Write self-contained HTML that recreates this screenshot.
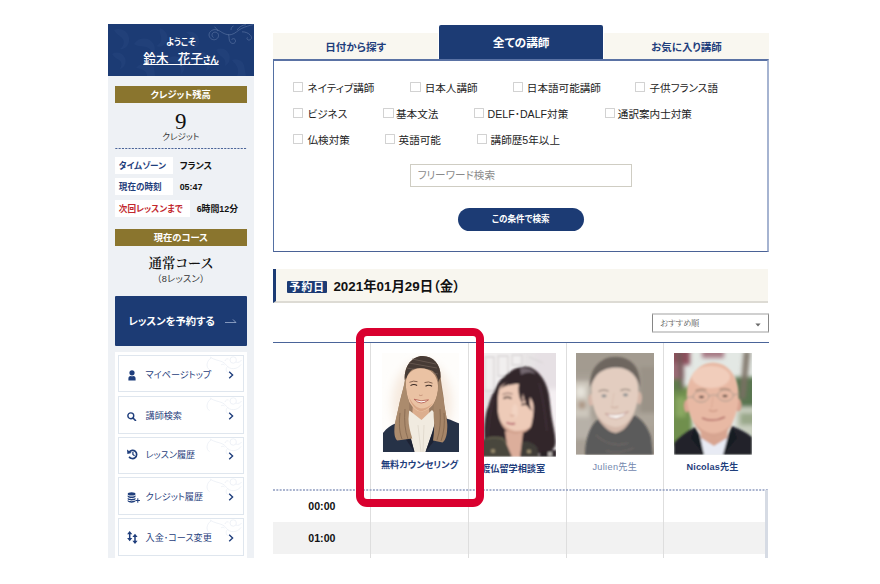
<!DOCTYPE html>
<html lang="ja">
<head>
<meta charset="utf-8">
<title>講師検索</title>
<style>
*{box-sizing:border-box;margin:0;padding:0}
html,body{width:880px;height:584px;background:#fff;overflow:hidden}
body{position:relative;font-family:"Liberation Sans","Noto Sans CJK JP",sans-serif;color:#222;font-size:10px;line-height:1;font-feature-settings:"palt"}
.abs{position:absolute}
.serif{font-family:"Liberation Serif","Noto Serif CJK SC",serif}
/* sidebar */
#side{left:108.2px;top:24.4px;width:145.6px;height:534px;background:#eef1f5}
#welcome{left:0;top:0;width:145.6px;height:52px;background:#1c3b74;color:#fff;text-align:center;overflow:hidden}
#welcome .w1{position:absolute;left:0;right:0;top:13.3px;font-size:8.6px;font-weight:700}
#welcome .w2{position:absolute;left:0;right:0;top:28.2px;font-size:12.6px;font-weight:500;white-space:pre;word-spacing:1.2px}
#welcome .w2 span{text-decoration:underline;text-underline-offset:0.6px;text-decoration-thickness:0.8px}
#welcome .w2 small{font-size:8.6px;font-weight:700}
.gold{left:6.6px;width:132px;height:16.5px;background:#8a752e;color:#fff;font-weight:700;font-size:9.3px;text-align:center;line-height:18.3px;overflow:hidden}
.lbl{left:6.6px;height:17px;background:#fff;color:#1f3e7c;font-weight:700;font-size:8.6px;line-height:18.6px;overflow:hidden;padding-left:4px;white-space:nowrap}
.val{font-weight:700;font-size:8.9px;line-height:18.6px;color:#111;white-space:nowrap}
#reserve{left:6.6px;top:271.4px;width:132px;height:50px;background:#1c3b74;color:#fff;font-weight:700;font-size:10.3px;line-height:52px;padding-left:13.5px;border-radius:1px}
#menu{left:6.6px;top:327.5px;width:132px;height:206.5px;background:#fff}
.mi{left:3.4px;width:125.6px;border:1px solid #dfe6ee;background:#fff;color:#1f3e7c;font-size:9.1px;line-height:20px;white-space:nowrap}
.mi .t{position:absolute;left:26.4px}
.mi svg.ic{position:absolute}
.mi svg.ch{position:absolute;left:109.3px}
.mi svg.orn{position:absolute;right:0;top:0}
.mi{overflow:hidden}
/* main */
.tab{top:32.5px;height:26.2px;width:164.4px;background:#f9f7f0;color:#1f3e7c;font-weight:700;font-size:10.5px;text-align:center;line-height:29.6px}
.tab.on{top:24.5px;height:34.8px;background:#1c3b74;color:#fff;line-height:36px;border-radius:2px 2px 0 0;font-size:11.7px}
#panel{left:273px;top:59px;width:496px;height:193px;border:1px solid #5470a3;border-top:2px solid #5a72a4;border-right:2px solid #a6b4d1;border-bottom:1.1px solid #4a6296;background:#fff}
.cb{width:10.2px;height:10.2px;border:1px solid #d2d2d2;background:#fff;border-radius:0.5px}
.ct{font-size:10.6px;color:#222;white-space:nowrap;line-height:12px}
#kw{left:409.7px;top:164.3px;width:222.2px;height:23.2px;border:1px solid #cfcdc3;background:#fff;font-size:10.6px;color:#8a8a8a;line-height:21.4px;padding-left:7px}
#go{left:457.9px;top:208px;width:125.7px;height:23.4px;border-radius:12px;background:#1c3b74;color:#fff;font-weight:700;font-size:8.6px;text-align:center;line-height:23.6px}
#dbar{left:273.4px;top:269px;width:495px;height:34px;background:#f8f6ef;border-left:3.6px solid #1c3b74;border-bottom:2px solid #dddbd4}
#badge{left:287px;top:280.7px;width:39.6px;height:12.6px;background:#1c3b74;color:#fff;font-weight:700;font-size:10.8px;line-height:12.6px;text-align:center;overflow:hidden;letter-spacing:1px;padding-left:1px;border-radius:1px}
#date{left:333.4px;top:279px;font-size:13.4px;font-weight:700;color:#111;line-height:16px;white-space:nowrap}
#sel{left:652px;top:313.4px;width:116.6px;height:19.4px;border:1px solid #868686;border-top:2px solid #d0d0d0;border-bottom:2px solid #d0d0d0;border-radius:1px;background:#fff;font-size:8.2px;font-weight:400;color:#555;line-height:18px;padding-left:6.8px}

.vl{top:343px;width:1px;height:215px;background:#dedede}
.tm{left:273.4px;width:97px;text-align:center;font-weight:700;font-size:10.6px;color:#111;line-height:12px}
.nm{font-weight:700;font-size:9.15px;color:#1f3e7c;text-align:center;line-height:11px;white-space:nowrap}
#redbox{left:355.6px;top:327.8px;width:128.4px;height:179.2px;border:8px solid #d9002f;border-radius:11px}
</style>
</head>
<body>

<!-- ================= SIDEBAR ================= -->
<div id="side" class="abs">
  <div id="welcome" class="abs">
    <svg class="abs" style="left:0;top:0" width="146" height="52" viewBox="0 0 146 52">
      <g fill="#2b4b87" opacity="0.32">
        <path d="M6 6c7-3 14 1 15 8s-4 12-9 11c4-3 5-8 2-11s-6-4-8-8zM4 30c5-3 11-1 13 4s-1 10-5 11c2-4 2-7-1-9s-5-3-7-6zM26 20c4-6 12-7 17-3s5 11 1 15c0-5-2-8-6-9s-8 0-12-3zM28 44c5-6 13-6 18-1l1 9h-8c0-4-3-7-11-8zM52 4c6 2 9 8 7 13s-7 7-11 5c4-2 6-5 5-9s-2-6-1-9zM58 36c5-5 12-5 16 0s3 11-1 14c1-5-1-8-4-10s-7-2-11-4zM78 8c6-2 12 2 13 7s-2 10-7 10c3-3 4-6 2-9s-5-5-8-8zM86 30c6-4 13-2 16 3s1 12-4 14c2-5 1-8-2-11s-6-3-10-6zM108 26c5-3 11-1 13 4s0 10-4 12c1-4 0-7-3-9s-4-4-6-7zM124 36c5-2 10 0 12 5l2 11h-9c2-4 1-8-1-11s-3-3-4-5z"/>
      </g>
      <g fill="none" stroke="#7f95bd" stroke-width="0.55" opacity="0.75">
        <path d="M105.5 13.5c-2-1-2-4 0-5s5 0 5 3-3 5-6 4-5-5-2-8 7-2 10 0 7 4 11 3 6-4 10-6 8-3 12-4"/>
        <path d="M120.5 10.4c1 3 0 6 2 8s5 1 5-1.5-3-3-4-1"/>
        <path d="M110 7c-1-2-3-4-3.500-4M123 6c0-2 1-3.500 2.500-4M134 7.800c3 0 6 1 8 3s2 4 0 5-4-1-2.500-2.500"/>
        <path d="M129 6.100c2-3 5-5 9-5.500"/>
      </g>
    </svg>
    <div class="w1">ようこそ</div>
    <div class="w2"><span>鈴木  花子<small>さん</small></span></div>
  </div>

  <div class="abs gold" style="top:62px">クレジット残高</div>
  <div class="abs serif" style="left:0;width:145.3px;top:84.4px;text-align:center;font-size:23px;line-height:26px;color:#111">9</div>
  <div class="abs" style="left:0;width:145.3px;top:108.5px;text-align:center;font-size:8.6px;line-height:9px;color:#333">クレジット</div>
  <svg class="abs" style="left:6.6px;top:122.6px" width="132" height="3" viewBox="0 0 132 3"><line x1="0.3" y1="1.5" x2="132" y2="1.5" stroke="#4a6499" stroke-width="1.1" stroke-dasharray="2.1 1.2"/></svg>

  <div class="abs lbl" style="top:132.8px;width:58px">タイムゾーン</div>
  <div class="abs val" style="top:132.8px;left:71.5px">フランス</div>
  <div class="abs lbl" style="top:154.1px;width:58px">現在の時刻</div>
  <div class="abs val" style="top:154.1px;left:71.5px">05:47</div>
  <div class="abs lbl" style="top:175.6px;width:75px;color:#c2272d">次回レッスンまで</div>
  <div class="abs val" style="top:175.6px;left:88.5px">6時間12分</div>

  <div class="abs gold" style="top:204.8px">現在のコース</div>
  <div class="abs serif" style="left:0;width:145.3px;top:230.6px;text-align:center;font-size:13.4px;font-weight:600;line-height:18px;color:#111">通常コース</div>
  <div class="abs" style="left:0;width:145.3px;top:249.5px;text-align:center;font-size:9.2px;letter-spacing:0.3px;line-height:10px;color:#333">（8レッスン）</div>

  <div id="reserve" class="abs">レッスンを予約する
    <svg class="abs" style="left:110px;top:22px" width="12" height="6" viewBox="0 0 12 6"><path d="M0 4.5h11L8 1.5" fill="none" stroke="#9fb0cf" stroke-width="0.8"/></svg>
  </div>

  <div id="menu" class="abs">
    <div class="abs mi" style="top:3.2px;height:37.3px"><svg class="orn" width="40" height="19" viewBox="0 0 40 19"><g fill="none" stroke="#e8ecf3" stroke-width="0.7"><path d="M6.500 13.500C3 12 3 5 8.200 1.900M7 1C11 4 16 4.300 19.100 5.700C22 7 23 9 24.600 10.600C27 12.800 30 13 32.800 12.300C35 11.600 37 10 38.200 8.400M24.600 10.600C23 12 22.500 14.500 24.500 16.500M22 5C22.500 3 24 2.500 25.500 3M18 9C19 8 20.500 8 21.500 9"/><circle cx="30.200" cy="4" r="3.200"/><path d="M33 6C35 7 37.500 6 38.500 4"/></g></svg><svg class="ic" style="left:8.6px;top:13.9px" width="8" height="11" viewBox="0 0 8 11"><circle cx="4" cy="2.8" r="2.6" fill="#1f3e7c"/><path d="M0.4 10.6V8.4C0.4 6.6 1.7 5.9 2.6 5.9C3.4 6.4 4.6 6.4 5.4 5.9C6.3 5.9 7.6 6.6 7.6 8.4V10.6Z" fill="#1f3e7c"/></svg><span class="t" style="top:8.6px">マイページトップ</span><svg class="ch" style="top:14.6px" width="6" height="8" viewBox="0 0 6 8"><path d="M1.2 0.8L4.6 4L1.2 7.2" fill="none" stroke="#1f3e7c" stroke-width="1.35"/></svg></div>
    <div class="abs mi" style="top:44.3px;height:37.8px"><svg class="orn" width="40" height="19" viewBox="0 0 40 19"><g fill="none" stroke="#e8ecf3" stroke-width="0.7"><path d="M6.500 13.500C3 12 3 5 8.200 1.900M7 1C11 4 16 4.300 19.100 5.700C22 7 23 9 24.600 10.600C27 12.800 30 13 32.800 12.300C35 11.600 37 10 38.200 8.400M24.600 10.600C23 12 22.500 14.500 24.500 16.500M22 5C22.500 3 24 2.500 25.500 3M18 9C19 8 20.500 8 21.500 9"/><circle cx="30.200" cy="4" r="3.200"/><path d="M33 6C35 7 37.500 6 38.500 4"/></g></svg><svg class="ic" style="left:8.2px;top:14.5px" width="9.4" height="9.4" viewBox="0 0 9.4 9.4"><circle cx="3.8" cy="3.8" r="2.95" fill="none" stroke="#1f3e7c" stroke-width="1.4"/><path d="M6 6L8.5 8.5" stroke="#1f3e7c" stroke-width="1.6" stroke-linecap="round"/></svg><span class="t" style="top:9.1px">講師検索</span><svg class="ch" style="top:15.1px" width="6" height="8" viewBox="0 0 6 8"><path d="M1.2 0.8L4.6 4L1.2 7.2" fill="none" stroke="#1f3e7c" stroke-width="1.35"/></svg></div>
    <div class="abs mi" style="top:85.5px;height:37px"><svg class="orn" width="40" height="19" viewBox="0 0 40 19"><g fill="none" stroke="#e8ecf3" stroke-width="0.7"><path d="M6.500 13.500C3 12 3 5 8.200 1.900M7 1C11 4 16 4.300 19.100 5.700C22 7 23 9 24.600 10.600C27 12.800 30 13 32.800 12.300C35 11.600 37 10 38.200 8.400M24.600 10.600C23 12 22.500 14.500 24.500 16.500M22 5C22.500 3 24 2.500 25.500 3M18 9C19 8 20.500 8 21.500 9"/><circle cx="30.200" cy="4" r="3.200"/><path d="M33 6C35 7 37.500 6 38.500 4"/></g></svg><svg class="ic" style="left:8.2px;top:10.9px" width="11" height="10.4" viewBox="0 0 11 10.4"><path d="M2.2 3.1A4.1 4.1 0 1 1 2.1 7.7" fill="none" stroke="#1f3e7c" stroke-width="1.7"/><path d="M0 0.5L0.4 4.9L4.6 4Z" fill="#1f3e7c"/><path d="M5.9 2.9V5.5L7.6 6.7" fill="none" stroke="#1f3e7c" stroke-width="1.25"/></svg><span class="t" style="top:6.6px">レッスン履歴</span><svg class="ch" style="top:13.2px" width="6" height="8" viewBox="0 0 6 8"><path d="M1.2 0.8L4.6 4L1.2 7.2" fill="none" stroke="#1f3e7c" stroke-width="1.35"/></svg></div>
    <div class="abs mi" style="top:125.5px;height:37.6px"><svg class="orn" width="40" height="19" viewBox="0 0 40 19"><g fill="none" stroke="#e8ecf3" stroke-width="0.7"><path d="M6.500 13.500C3 12 3 5 8.200 1.900M7 1C11 4 16 4.300 19.100 5.700C22 7 23 9 24.600 10.600C27 12.800 30 13 32.800 12.300C35 11.600 37 10 38.200 8.400M24.600 10.600C23 12 22.500 14.500 24.500 16.500M22 5C22.500 3 24 2.500 25.500 3M18 9C19 8 20.500 8 21.500 9"/><circle cx="30.200" cy="4" r="3.200"/><path d="M33 6C35 7 37.500 6 38.500 4"/></g></svg><svg class="ic" style="left:8.2px;top:13.3px" width="13" height="11" viewBox="0 0 13 11"><g fill="#1f3e7c"><ellipse cx="4.6" cy="1.9" rx="3.9" ry="1.7"/><path d="M0.7 3.3c1 1.6 6.8 1.6 7.8 0v1.5c-1 1.6-6.8 1.6-7.8 0z"/><path d="M0.7 5.7c1 1.6 6.8 1.6 7.8 0v1.5c-1 1.6-6.8 1.6-7.8 0z"/><path d="M0.7 8.1c1 1.6 6.8 1.6 7.8 0v1.2c-1 1.8-6.8 1.8-7.8 0z"/><path d="M10.3 6.3h1v1.7h1.6v1h-1.6v1.7h-1v-1.7h-1.6v-1h1.6z"/></g></svg><span class="t" style="top:8.4px">クレジット履歴</span><svg class="ch" style="top:14.4px" width="6" height="8" viewBox="0 0 6 8"><path d="M1.2 0.8L4.6 4L1.2 7.2" fill="none" stroke="#1f3e7c" stroke-width="1.35"/></svg></div>
    <div class="abs mi" style="top:166.5px;height:37.3px"><svg class="orn" width="40" height="19" viewBox="0 0 40 19"><g fill="none" stroke="#e8ecf3" stroke-width="0.7"><path d="M6.500 13.500C3 12 3 5 8.200 1.900M7 1C11 4 16 4.300 19.100 5.700C22 7 23 9 24.600 10.600C27 12.800 30 13 32.800 12.300C35 11.600 37 10 38.200 8.400M24.600 10.600C23 12 22.500 14.500 24.500 16.500M22 5C22.500 3 24 2.500 25.500 3M18 9C19 8 20.500 8 21.500 9"/><circle cx="30.200" cy="4" r="3.200"/><path d="M33 6C35 7 37.500 6 38.500 4"/></g></svg><svg class="ic" style="left:8.2px;top:12px" width="11" height="13" viewBox="0 0 11 13"><g fill="#1f3e7c"><path d="M2.7 0L5.3 3.2H3.45V7H5.3L2.7 10.2L0.1 7H1.95V3.2H0.1Z"/><path d="M8 2.8L10.6 6H8.75V9.8H10.6L8 13L5.4 9.8H7.25V6H5.4Z"/></g></svg><span class="t" style="top:8.6px">入金･コース変更</span><svg class="ch" style="top:14.6px" width="6" height="8" viewBox="0 0 6 8"><path d="M1.2 0.8L4.6 4L1.2 7.2" fill="none" stroke="#1f3e7c" stroke-width="1.35"/></svg></div>
  </div>
</div>

<!-- ================= MAIN ================= -->
<div class="abs tab" style="left:273.4px">日付から探す</div>
<div class="abs tab on" style="left:439.2px;width:163.9px">全ての講師</div>
<div class="abs tab" style="left:604.4px;width:164.2px">お気に入り講師</div>
<div id="panel" class="abs"></div>

<div class="abs cb" style="left:293.2px;top:81.6px"></div><div class="abs ct" style="left:307.5px;top:82.2px">ネイティブ講師</div>
<div class="abs cb" style="left:410.4px;top:81.6px"></div><div class="abs ct" style="left:424.7px;top:82.2px">日本人講師</div>
<div class="abs cb" style="left:513.0px;top:81.6px"></div><div class="abs ct" style="left:526.8px;top:82.2px">日本語可能講師</div>
<div class="abs cb" style="left:635.2px;top:81.6px"></div><div class="abs ct" style="left:649.5px;top:82.2px">子供フランス語</div>
<div class="abs cb" style="left:293.2px;top:107.6px"></div><div class="abs ct" style="left:307.5px;top:108.2px">ビジネス</div>
<div class="abs cb" style="left:383.4px;top:107.6px"></div><div class="abs ct" style="left:396.0px;top:108.2px">基本文法</div>
<div class="abs cb" style="left:474.2px;top:107.6px"></div><div class="abs ct" style="left:487.6px;top:108.2px">DELF･DALF対策</div>
<div class="abs cb" style="left:604.5px;top:107.6px"></div><div class="abs ct" style="left:617.8px;top:108.2px">通訳案内士対策</div>
<div class="abs cb" style="left:293.2px;top:133.5px"></div><div class="abs ct" style="left:307.5px;top:134.1px">仏検対策</div>
<div class="abs cb" style="left:385.2px;top:133.5px"></div><div class="abs ct" style="left:398.6px;top:134.1px">英語可能</div>
<div class="abs cb" style="left:477.0px;top:133.5px"></div><div class="abs ct" style="left:490.6px;top:134.1px">講師歴5年以上</div>
<div id="kw" class="abs">フリーワード検索</div>
<div id="go" class="abs">この条件で検索</div>

<div id="dbar" class="abs"></div>
<div id="badge" class="abs">予約日</div>
<div id="date" class="abs">2021年01月29日（金）</div>

<div id="sel" class="abs serif">おすすめ順<svg class="abs" style="left:101.6px;top:7.2px" width="6" height="4" viewBox="0 0 6 4"><path d="M0.4 0.4H5.6L3 3.4Z" fill="#6a6a6a"/></svg></div>


<!-- table -->
<div class="abs" style="left:273.4px;top:342px;width:495.4px;height:1.2px;background:#4a6499"></div>
<div class="abs" style="left:273.4px;top:522px;width:491.6px;height:32px;background:#f2f2f2"></div>
<div class="abs vl" style="left:370.2px"></div>
<div class="abs vl" style="left:468.2px"></div>
<div class="abs vl" style="left:565.8px"></div>
<div class="abs vl" style="left:663.2px"></div>
<svg class="abs" style="left:273.4px;top:488px" width="495" height="4" viewBox="0 0 495 4"><line x1="0" y1="2" x2="495" y2="2" stroke="#8e9cc0" stroke-width="1.7" stroke-dasharray="2 1.33"/></svg>
<div class="abs" style="left:765px;top:490px;width:3.3px;height:68px;background:#d6dbe4"></div>
<div class="abs tm" style="top:500px">00:00</div>
<div class="abs tm" style="top:531.5px">01:00</div>

<div class="abs nm" style="left:370.6px;width:98px;top:459.5px">無料カウンセリング</div>
<div class="abs nm" style="left:481.2px;top:464.2px">渡仏留学相談室</div>
<div class="abs nm" style="left:566.2px;width:97.3px;top:462.2px;font-weight:400;color:#7388ae;letter-spacing:0.35px">Julien先生</div>
<div class="abs nm" style="left:663.5px;width:98px;top:462.2px;letter-spacing:0.15px">Nicolas先生</div>

<!-- PHOTOS -->
<svg class="abs" style="left:381.5px;top:352.8px" width="77.3" height="99" viewBox="0 0 77.3 99">
<defs><filter id="b1" x="-20%" y="-20%" width="140%" height="140%"><feGaussianBlur stdDeviation="0.75"/></filter>
<filter id="b1b" x="-30%" y="-30%" width="160%" height="160%"><feGaussianBlur stdDeviation="5"/></filter>
<clipPath id="c1"><rect width="77.3" height="99"/></clipPath></defs>
<g clip-path="url(#c1)">
<rect width="77.3" height="99" fill="#fefdfb"/>
<ellipse cx="40" cy="50" rx="30" ry="42" fill="#f6eadf" filter="url(#b1b)"/>
<g filter="url(#b1)">
<!-- back hair mass -->
<path d="M22.8 27C22 12 31 3 40.7 3.1C51 3.4 59 11 58.6 24C60 36 62 44 62.3 52C64 62 66 70 65.2 76C65 84 63 88 60.5 89.4L51 87.5L52 66L27 66L30.3 85.6L15.2 87.5C12 84 11.5 79 12.4 74C14 66 16 58 17.1 52C19 42 22 36 22.8 27Z" fill="#9a7b62"/>
<!-- dark top -->
<path d="M22.8 27C22 12 31 3 40.7 3.1C51 3.4 59 11 58.6 24L56.7 29C55.5 23 53 19.5 50 17.5C44 15 36 14.5 31 16C27.5 18 25.5 21.5 24.6 25.5Z" fill="#463a34"/>
<path d="M27 10l28 5M25 15l31 6M30 6l24 5" stroke="#7a6a60" stroke-width="0.6" fill="none"/>
<!-- neck -->
<path d="M31 50L47 50L47.5 66L39 70L30 66Z" fill="#dcae8e"/>
<!-- shirt -->
<path d="M27.5 57.5L22.5 69L32 99L44 99L55.5 63L50 57L39.5 67Z" fill="#f1ebe0"/>
<path d="M36 72l3 27M42 72l-1 27" stroke="#d8d0c2" stroke-width="0.6" fill="none"/>
<!-- blazer -->
<path d="M1 99L1 80C5 75 9 72.5 13.3 70.6L23 65.5L27 80L32.5 99Z" fill="#283046"/>
<path d="M77.3 99L77.3 70.6C73 68.5 69 67 66 66L55 62.5L50 80L43.5 99Z" fill="#283046"/>
<path d="M23 65.5L21 82L32.5 99L27 78Z" fill="#1b2233"/>
<path d="M55 62.5L58 80L43.5 99L51 78Z" fill="#1b2233"/>
<!-- face -->
<path d="M23.8 29C24.4 20.5 31 15.5 38 15.2C47.5 14.8 55.6 21 56 33C56.2 40 54.6 46 51.5 50.8C48.4 55.4 43 58.6 38.8 58.6C34 58.3 29.6 53.4 27 48.2C24.8 43 23.7 36 23.8 29Z" fill="#eac2a3"/>
<path d="M27 44C29 52 34 57.5 38.8 58.3C43 58 48 54.5 51 50C47 54 43 55.5 39 55.5C34 55 30 50 27 44Z" fill="#d9a685"/>
<!-- front strands -->
<path d="M24 24C21.5 34 19 44 17.1 52C15 62 12.5 70 12.4 76C12 82 13.5 86 15.2 87.5L30.3 85.6C28 78 26.5 72 26.5 66C27 60 27.6 54 26.8 48C24.8 42 23.2 34 24 24Z" fill="#ab8b6d"/>
<path d="M57 25C59.5 36 61.5 44 62.3 52C64 62 66 70 65.2 76C65 83 63 88 60.5 89.4L51 87.5C52 80 52.5 74 52 68C51.5 62 51.4 56 51.8 51C54.8 45 57 36 57 25Z" fill="#a68567"/>
<path d="M18 60C17 70 17 78 20 86M23 56C22 68 23 78 26 86M58 56C59 68 58 78 55 87M62 60C63 70 62 80 59 88" stroke="#7d6049" stroke-width="0.7" fill="none"/>
<!-- features -->
<path d="M28.5 32.6q3.2-2 6.6-0.2" stroke="#3a2a24" stroke-width="1.1" fill="none"/>
<path d="M43.5 33.2q3.2-2 6.6 0" stroke="#3a2a24" stroke-width="1.1" fill="none"/>
<path d="M27.5 29.3q4-2 8-0.6M42.5 29.6q4-1.6 8 0.6" stroke="#6a4b3b" stroke-width="0.8" fill="none"/>
<path d="M32 46.2Q39 53.5 46.5 46.8Q39 49 32 46.2Z" fill="#fffaf5" stroke="#b8675a" stroke-width="0.9"/>
<path d="M37 42q1.8 1.2 3.6 0" stroke="#c08d74" stroke-width="0.8" fill="none"/>
</g>
</g></svg>
<svg class="abs" style="left:478.5px;top:352.8px" width="77.5" height="103.8" viewBox="0 0 77.5 103.8">
<defs><filter id="b2" x="-20%" y="-20%" width="140%" height="140%"><feGaussianBlur stdDeviation="0.85"/></filter>
<filter id="b2b" x="-30%" y="-30%" width="160%" height="160%"><feGaussianBlur stdDeviation="2.5"/></filter>
<clipPath id="c2"><rect width="77.5" height="103.8"/></clipPath></defs>
<g clip-path="url(#c2)">
<rect width="77.5" height="103.8" fill="#e7e4e5"/>
<g filter="url(#b2b)">
<rect x="-3" y="-3" width="46" height="40" fill="#f1efef"/>
<rect x="56" y="-3" width="26" height="40" fill="#e6e0e4"/>
<rect x="66" y="36" width="16" height="56" fill="#f4eff2"/>
</g>
<g filter="url(#b2)">
<path d="M6 4h9v34h-9zM19 3h10v20h-10zM33 2h10v10h-10zM50 4l14 6" fill="none" stroke="#d9d5d6" stroke-width="1.3"/>
<!-- hair -->
<path d="M44.3 13.7C50 13 56 16 59.9 20.6C65 26 68 33 69.6 40C71 48 71.5 56 72.6 63.5C74 72 76 80 76.5 86.9C77 92 75.5 95 73.5 96.7C70 100 64 101.5 59.9 100.6C54 101 48 99 44.3 96.7L8 95C6 92 5 86 5.3 81C5 76 5.5 70 6.2 65.4C7 60 8 56 9.2 53.7C11 46 14 40 17 34.2C20 28 24 24 28.7 20.6C33 16.5 38 14 44.3 13.7Z" fill="#33252b"/>
<path d="M41 15.5C47 14 53 16 57 21C51 18.5 46 19 42 22Z" fill="#73676f"/>
<path d="M60 30C64 44 66 60 68 78M14 46C11 60 9 72 9 86" stroke="#43353b" stroke-width="1.2" fill="none"/>
<!-- jacket -->
<path d="M-1 104L2 88C8 83.5 16 82.5 24 84L31 92L35 104Z" fill="#48463c"/>
<path d="M38 104L41 90C46 87 54 89 58 94L60 104Z" fill="#403e37"/>
<path d="M8 86C12 84 18 84.5 24 86L28 92" stroke="#66624f" stroke-width="1.3" fill="none"/>
<path d="M60 104L62 98L77.5 97L77.5 104Z" fill="#2b2226"/>
<rect x="69" y="99" width="4" height="4" fill="#b9b3b0"/>
<!-- neck -->
<path d="M26 78L44 80L41 104L33 104L28 92Z" fill="#dcae9b"/>
<!-- face -->
<path d="M20.9 34.2C25 29.5 33 27.5 40.4 28.4C48 30 54 38 54.5 50C55 58 54 66 52.1 73.2C49 78 42 81.5 34.5 81C29 80 24 75 21.8 69.3C19.5 64 18.5 58 18.9 53.7C18.5 46 19 40 20.9 34.2Z" fill="#eecbb8"/>
<path d="M22 68C25 76 30 80.5 34.5 81C42 81.5 49 78 52.1 73.2C48 77 42 78.5 36 78C30 77 25 73 22 68Z" fill="#d4a491"/>
<ellipse cx="36" cy="58" rx="3" ry="7" fill="#f2d3c2"/>
<!-- bangs -->
<path d="M38 27C42 25 48 26 52 30C58 36 60 48 59 60C58.5 64 57 66 55.5 66C56.5 58 55 50 51 44C50 50 51 54 53 58C48 54 45 48 44 40C43 44 43 47 44 51C40 46 38.5 38 40 31C34 31 27 32 21 36C25 30 31 27 38 27Z" fill="#33252b"/>
<path d="M24.5 45.5q4-2.4 8 0.2" stroke="#2a1a1a" stroke-width="1.5" fill="none"/>
<path d="M42.5 52q4-2 8.5 1.2" stroke="#2a1a1a" stroke-width="1.5" fill="none"/>
<path d="M23.5 41.5q5-2.5 10-0.5M42 47q5-1.5 9 1" stroke="#5a4040" stroke-width="0.8" fill="none"/>
<path d="M27.5 69.5q4 2.2 8.5 0.8" stroke="#b5626c" stroke-width="1.8" fill="none"/>
<path d="M31 62q2 1.4 4.5 0.6" stroke="#c79684" stroke-width="0.9" fill="none"/>
<circle cx="14" cy="98" r="2.1" fill="#9b8d6e"/><circle cx="50" cy="98.5" r="2.1" fill="#9b8d6e"/>
</g>
</g></svg>
<svg class="abs" style="left:576px;top:352.8px;opacity:0.7" width="78" height="101.8" viewBox="0 0 78 101.8">
<defs><filter id="b3" x="-20%" y="-20%" width="140%" height="140%"><feGaussianBlur stdDeviation="0.9"/></filter>
<filter id="b3b" x="-30%" y="-30%" width="160%" height="160%"><feGaussianBlur stdDeviation="2.2"/></filter>
<clipPath id="c3"><rect width="78" height="101.8"/></clipPath></defs>
<g clip-path="url(#c3)">
<rect width="78" height="101.8" fill="#84796a"/>
<g filter="url(#b3b)">
<rect x="-3" y="-3" width="84" height="24" fill="#7d7262"/>
<rect x="-3" y="28" width="17" height="36" fill="#b9b1a2"/>
<rect x="0" y="34" width="9" height="10" fill="#ddd8cc"/>
<rect x="2" y="48" width="8" height="8" fill="#8a6a50"/>
<rect x="64" y="14" width="17" height="50" fill="#6f6555"/>
<rect x="-3" y="64" width="20" height="22" fill="#9a9184"/>
<rect x="62" y="60" width="20" height="14" fill="#8a8070"/>
</g>
<g filter="url(#b3)">
<!-- scarf -->
<path d="M9 102C9 90 12 78 18 70L24 64L40 80L58 62C66 66 72 74 75 84L77 102Z" fill="#171412"/>
<path d="M20 82C28 90 40 94 52 90M30 98C40 100 50 99 58 95" stroke="#2e2a27" stroke-width="1.4" fill="none"/>
<!-- ears -->
<ellipse cx="14.8" cy="47" rx="2.8" ry="6" fill="#c59a86"/><ellipse cx="63.2" cy="45" rx="2.8" ry="6.5" fill="#c29782"/>
<!-- face -->
<path d="M15.5 38C15 22 26 12 39 12C52 12 63 21 62.3 38C62 48 60 58 55 66C50 74 44 79 39.5 79.5C34 79 27 73 22 65C18 58 15.5 48 15.5 38Z" fill="#d8b9a6"/>
<path d="M20 60C25 72 33 79 39.5 79.5C46 79 52 73 57 62C52 70 46 74 40 74C33 74 25 69 20 60Z" fill="#c29c88"/>
<!-- hair -->
<path d="M14.5 35C12 17 24 3.600 40 3.800C55 4.100 66 15 63.800 35C62 27 58 21 52 17.500C47 15 43 14.500 39 14.800C31 15.200 23 18 19 25C16.500 29 15.200 32 14.500 35Z" fill="#33271f"/>
<path d="M22.5 38.5q5-2.6 10-0.4M44.5 37.6q5-2.4 10 0.2" stroke="#5a4638" stroke-width="1.2" fill="none"/>
<ellipse cx="28" cy="43" rx="2.6" ry="1.4" fill="#4a565c"/><ellipse cx="49.5" cy="42" rx="2.6" ry="1.4" fill="#4a565c"/>
<path d="M29 60.5Q40 72 52.5 58.5Q40 64 29 60.5Z" fill="#fffdf8" stroke="#a4665b" stroke-width="1"/>
<path d="M35 53.5q3.6 2.4 7.2 0" stroke="#b58671" stroke-width="1.1" fill="none"/>
<path d="M38 40L36 52" stroke="#c9a591" stroke-width="1" fill="none"/>
</g>
</g></svg>
<svg class="abs" style="left:674px;top:352.8px" width="78" height="101.8" viewBox="0 0 78 101.8">
<defs><filter id="b4" x="-20%" y="-20%" width="140%" height="140%"><feGaussianBlur stdDeviation="0.85"/></filter>
<filter id="b4b" x="-30%" y="-30%" width="160%" height="160%"><feGaussianBlur stdDeviation="2.2"/></filter>
<clipPath id="c4"><rect width="78" height="101.8"/></clipPath></defs>
<g clip-path="url(#c4)">
<rect width="78" height="101.8" fill="#e3e8e4"/>
<g filter="url(#b4b)">
<rect x="-4" y="-4" width="20" height="16" fill="#8c4f5c"/>
<rect x="-4" y="10" width="14" height="16" fill="#9a6a74"/>
<rect x="28" y="-4" width="22" height="9" fill="#a87c86"/>
<rect x="-4" y="34" width="22" height="58" fill="#6f8f4e"/>
<rect x="2" y="44" width="10" height="20" fill="#8aa862"/>
<rect x="-4" y="26" width="12" height="12" fill="#5e7a4c"/>
<rect x="60" y="24" width="22" height="30" fill="#58754f"/>
<rect x="62" y="54" width="20" height="30" fill="#c9cfbf"/>
<rect x="66" y="60" width="16" height="12" fill="#9aa88a"/>
<path d="M70 -2L76 -2L71 46L66 46Z" fill="#7a7064"/>
<path d="M3 -2L7 -2L10 36L7 36Z" fill="#6d5a58"/>
</g>
<g filter="url(#b4)">
<!-- jacket -->
<path d="M0 102L0 90C5 84 12 79 21 74L30 102Z" fill="#21242c"/>
<path d="M78 102L78 84C72 79 65 76 58 73L48 102Z" fill="#21242c"/>
<path d="M22 80L31 102L49 102L58 80L40 92Z" fill="#e8ebf4"/>
<path d="M21 74L17 85L30 102L26 83Z" fill="#181a21"/>
<path d="M58 73L63 85L49 102L54 83Z" fill="#181a21"/>
<!-- neck -->
<path d="M25 68L55 68L53 85L40 93L27 85Z" fill="#d8a591"/>
<!-- ears -->
<ellipse cx="12.8" cy="53" rx="3" ry="6.5" fill="#dba693"/><ellipse cx="64.6" cy="52" rx="3" ry="6.5" fill="#d8a390"/>
<!-- head -->
<path d="M13 46C11.5 25 24 9.6 39 9.6C54 9.6 66 24 64.5 46C64 56 61 66 56 74C51 81 45 85 39.5 85.3C33 85 26 80 21 72C16 64 13.5 55 13 46Z" fill="#e8b9a4"/>
<ellipse cx="37" cy="24" rx="19" ry="11" fill="#f1cdbb"/>
<path d="M18 66C23 77 32 85 39.5 85.3C46 85 54 79 59 69C53 77 46 80.5 39.5 80.5C32 80.5 24 75 18 66Z" fill="#d7a490"/>
<!-- glasses -->
<ellipse cx="27" cy="43.5" rx="7.8" ry="5.6" fill="none" stroke="#a3968a" stroke-width="0.9"/>
<ellipse cx="51.5" cy="42.5" rx="7.8" ry="5.6" fill="none" stroke="#a3968a" stroke-width="0.9"/>
<path d="M34.8 43q4.5-2 9 -0.4M12.5 44.5l6.8-0.6M59.3 42l6-1.4" stroke="#a3968a" stroke-width="0.8" fill="none"/>
<ellipse cx="27.5" cy="44" rx="2.6" ry="1.3" fill="#574640"/><ellipse cx="51" cy="43" rx="2.6" ry="1.3" fill="#574640"/>
<path d="M21.5 37.6q5.5-2.8 11-0.6M45.5 36.6q5.5-2.2 11 0.6" stroke="#a98672" stroke-width="1.2" fill="none"/>
<path d="M28 65Q39 70 51 64" stroke="#b36e69" stroke-width="1.6" fill="none"/>
<path d="M35 57q4.2 2.6 8.4 0" stroke="#c48d7a" stroke-width="1.1" fill="none"/>
<path d="M39 44L37.5 55" stroke="#d9a995" stroke-width="1" fill="none"/>
</g>
</g></svg>

<div class="abs" id="redbox"></div>

</body>
</html>
